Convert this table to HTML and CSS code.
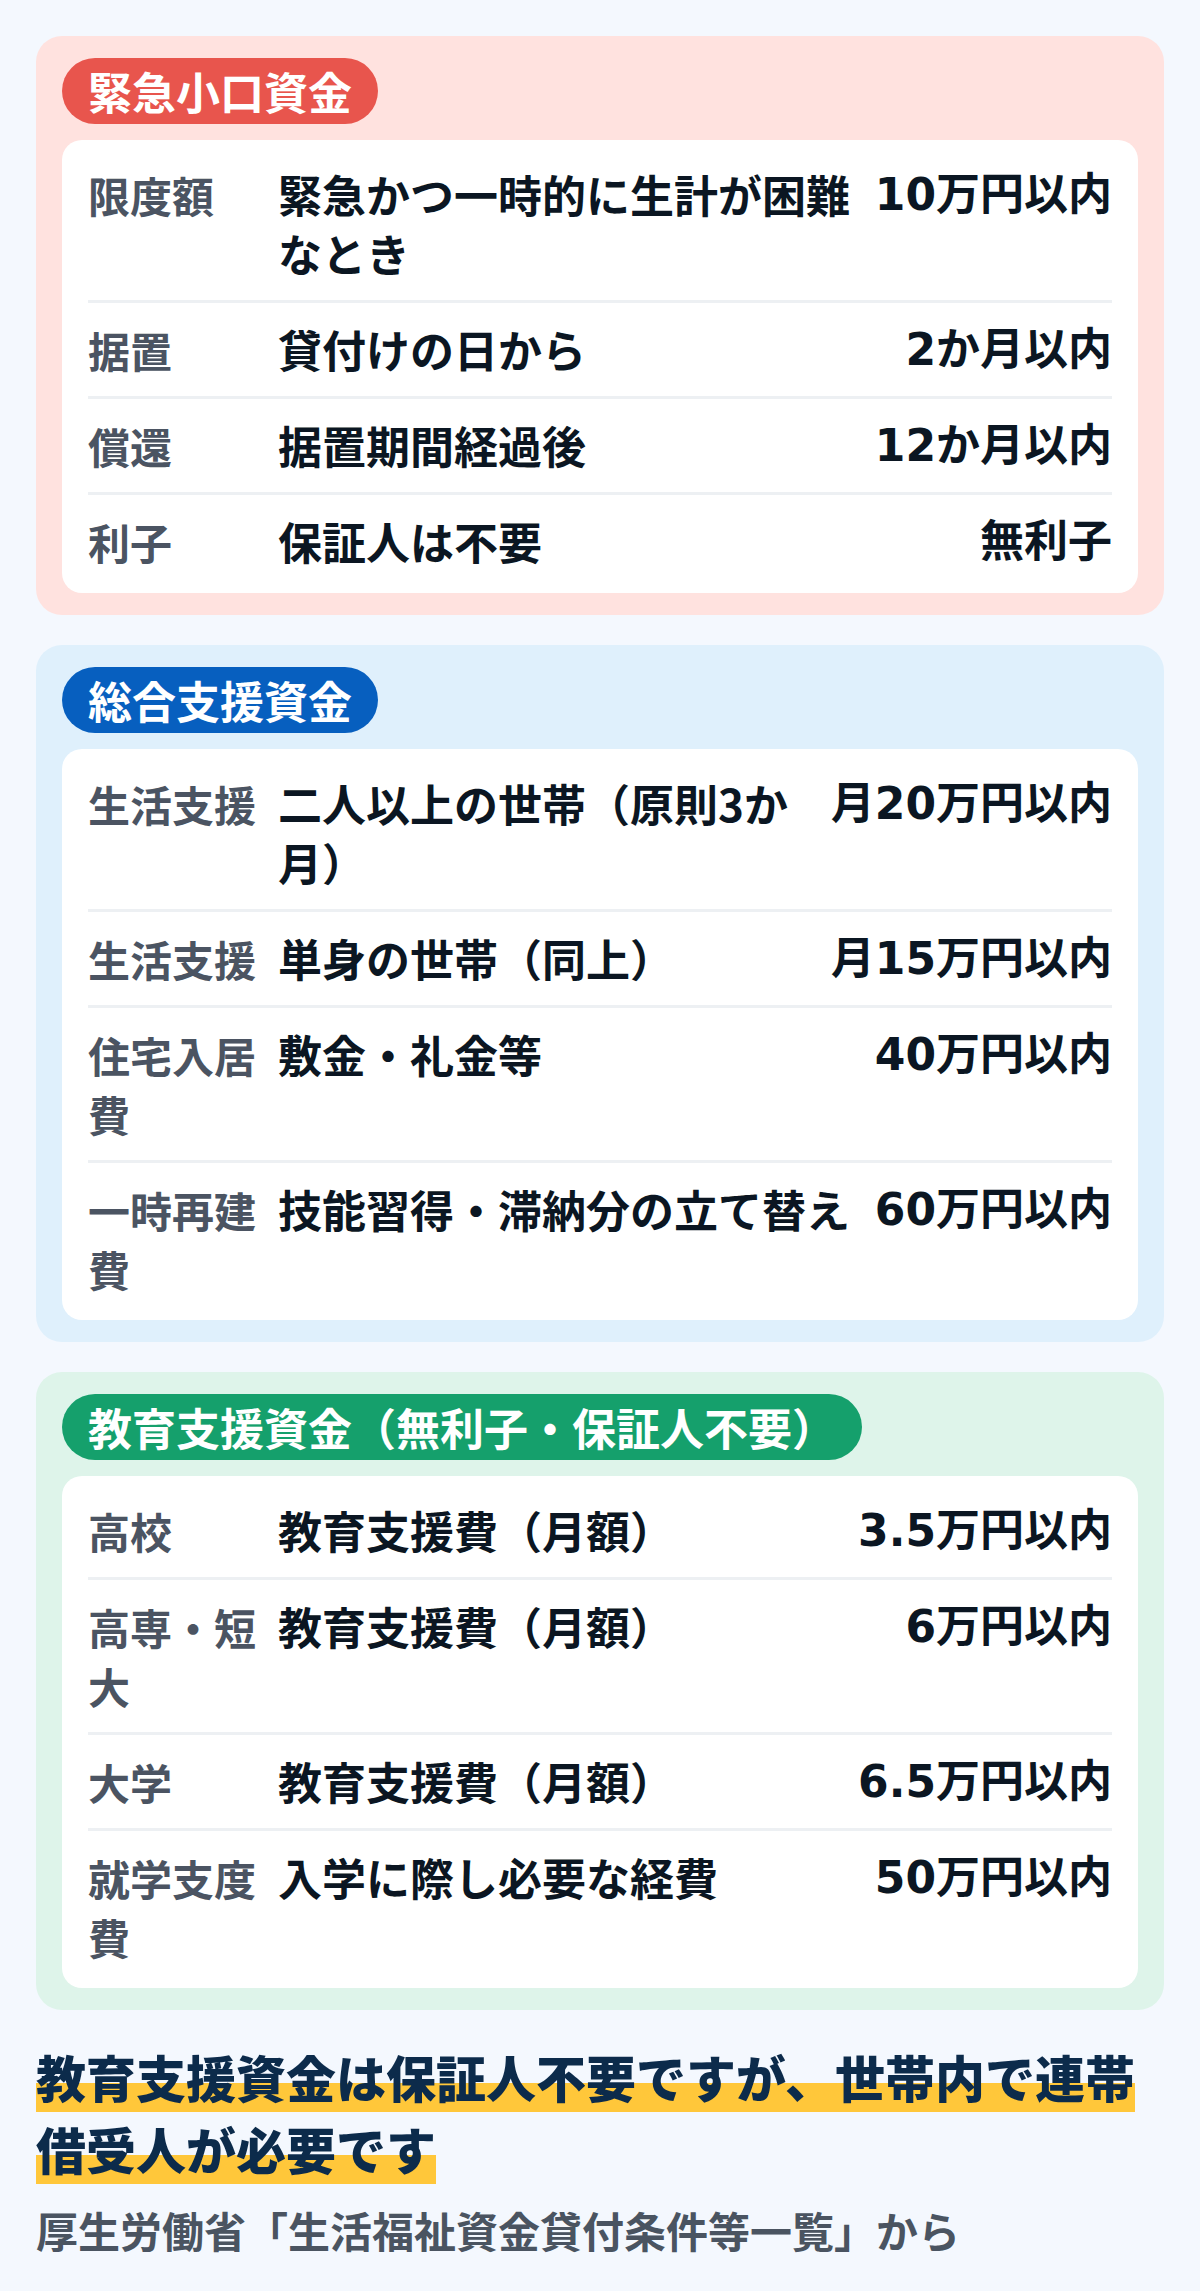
FILE: index.html
```html
<!DOCTYPE html>
<html lang="ja">
<head>
  <meta charset="UTF-8">
  <title>生活福祉資金の貸付条件</title>
  <link rel="stylesheet" href="styles.css">
</head>
<body>

  <main class="page">

    <section class="fund fund-red">
      <h2 class="badge">緊急小口資金</h2>
      <div class="table">
        <div class="row">
          <div class="label">限度額</div>
          <div class="desc">緊急かつ一時的に生計が困難なとき</div>
          <div class="amount">10万円以内</div>
        </div>
        <div class="row">
          <div class="label">据置</div>
          <div class="desc">貸付けの日から</div>
          <div class="amount">2か月以内</div>
        </div>
        <div class="row">
          <div class="label">償還</div>
          <div class="desc">据置期間経過後</div>
          <div class="amount">12か月以内</div>
        </div>
        <div class="row">
          <div class="label">利子</div>
          <div class="desc">保証人は不要</div>
          <div class="amount">無利子</div>
        </div>
      </div>
    </section>

    <section class="fund fund-blue">
      <h2 class="badge">総合支援資金</h2>
      <div class="table">
        <div class="row">
          <div class="label">生活支援</div>
          <div class="desc">二人以上の世帯（原則3か月）</div>
          <div class="amount">月20万円以内</div>
        </div>
        <div class="row">
          <div class="label">生活支援</div>
          <div class="desc">単身の世帯（同上）</div>
          <div class="amount">月15万円以内</div>
        </div>
        <div class="row">
          <div class="label">住宅入居費</div>
          <div class="desc">敷金・礼金等</div>
          <div class="amount">40万円以内</div>
        </div>
        <div class="row">
          <div class="label">一時再建費</div>
          <div class="desc">技能習得・滞納分の立て替え</div>
          <div class="amount">60万円以内</div>
        </div>
      </div>
    </section>

    <section class="fund fund-green">
      <h2 class="badge">教育支援資金（無利子・保証人不要）</h2>
      <div class="table">
        <div class="row">
          <div class="label">高校</div>
          <div class="desc">教育支援費（月額）</div>
          <div class="amount">3.5万円以内</div>
        </div>
        <div class="row">
          <div class="label">高専・短大</div>
          <div class="desc">教育支援費（月額）</div>
          <div class="amount">6万円以内</div>
        </div>
        <div class="row">
          <div class="label">大学</div>
          <div class="desc">教育支援費（月額）</div>
          <div class="amount">6.5万円以内</div>
        </div>
        <div class="row">
          <div class="label">就学支度費</div>
          <div class="desc">入学に際し必要な経費</div>
          <div class="amount">50万円以内</div>
        </div>
      </div>
    </section>

    <p class="note"><span class="marker">教育支援資金は保証人不要ですが、世帯内で連帯借受人が必要です</span></p>

    <p class="source">厚生労働省「生活福祉資金貸付条件等一覧」から</p>

  </main>

</body>
</html>
```

FILE: styles.css
```css
body {
  margin: 0;
  font-family: "Noto Sans CJK JP", "Noto Sans", sans-serif;
  background: #f4f8fe;
  color: #0b1622;
}

.page {
  display: flex;
  flex-direction: column;
  padding: 36px;
}

.fund {
  display: flex;
  flex-direction: column;
  align-items: flex-start;
  gap: 16px;
  padding: 22px 26px;
  border-radius: 26px;
  margin-bottom: 30px;
}

.fund-red { background: #ffe2df; }
.fund-blue { background: #dff0fc; }
.fund-green { background: #def4ea; }

.badge {
  margin: 0;
  padding: 0 26px;
  height: 66px;
  line-height: 66px;
  border-radius: 33px;
  font-size: 44px;
  font-weight: 700;
  color: #fff;
  white-space: nowrap;
}

.fund-red .badge { background: #e8554d; }
.fund-blue .badge { background: #075fbf; }
.fund-green .badge { background: #15a06c; }

.table {
  align-self: stretch;
  background: #fff;
  border-radius: 20px;
  padding: 8px 26px 5px;
}

.row {
  display: flex;
  align-items: flex-start;
  gap: 20px;
  padding: 17px 0;
  line-height: 59px;
}

.row + .row {
  border-top: 3px solid #edf0f3;
}

.label {
  width: 170px;
  flex-shrink: 0;
  font-size: 42px;
  font-weight: 700;
  color: #4b5462;
}

.desc {
  flex: 1;
  font-size: 44px;
  font-weight: 700;
}

/* wider digits, like the original's rounded face */
.amount {
  font-family: "DejaVu Sans", "Noto Sans CJK JP", sans-serif;
  font-size: 44px;
  font-weight: 700;
  white-space: nowrap;
  text-align: right;
}

.note {
  margin: 0 0 16px;
  font-size: 50px;
  line-height: 72px;
  font-weight: 900;
  color: #0c2b4b;
}

.marker {
  background: linear-gradient(transparent 60%, #ffc73a 60%);
}

.source {
  margin: 0;
  font-size: 42px;
  line-height: 60px;
  font-weight: 700;
  color: #4a5461;
}
```
